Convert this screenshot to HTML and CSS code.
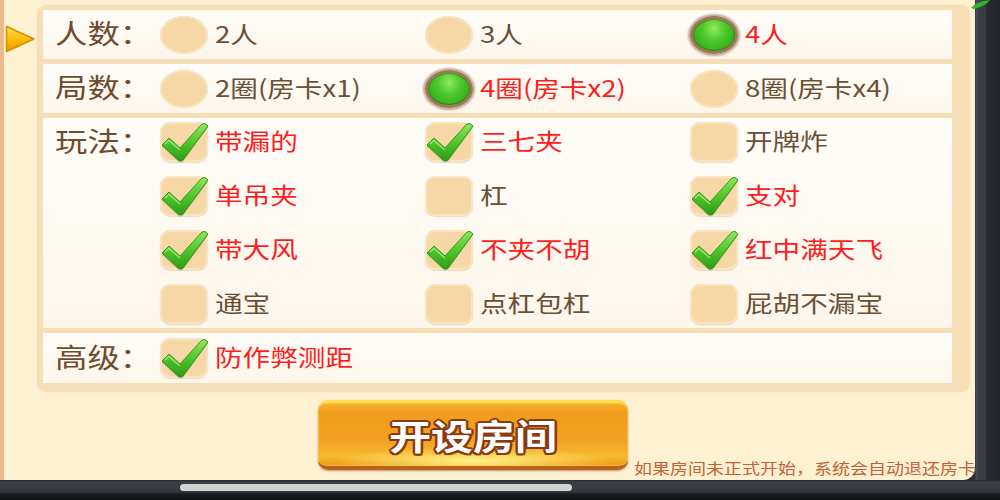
FILE: index.html
```html
<!DOCTYPE html>
<html lang="zh-CN">
<head>
<meta charset="utf-8">
<title>开设房间</title>
<link rel="stylesheet" href="styles.css">
</head>
<body>
<svg class="defs" width="0" height="0" aria-hidden="true">
  <defs>
    <linearGradient id="gcheck" x1="0" y1="0" x2="0" y2="1">
      <stop offset="0" stop-color="#8ee85a"/>
      <stop offset="0.55" stop-color="#4cc22a"/>
      <stop offset="1" stop-color="#2f9a17"/>
    </linearGradient>
    <linearGradient id="garrow" x1="0" y1="0" x2="0" y2="1">
      <stop offset="0" stop-color="#ffdc4a"/>
      <stop offset="0.6" stop-color="#f9b800"/>
      <stop offset="1" stop-color="#e79a00"/>
    </linearGradient>
    <symbol id="tick" viewBox="0 0 48 42">
      <path d="M1 24 L8 17 L19 27 L41 3 Q44 1 47 5 L22 39 Q19 41 17 39 Z" fill="#3b7d1f" opacity="0.35" transform="translate(0 1.5)"/>
      <path d="M1 24 L8 17 L19 27 L41 3 Q44 1 47 5 L22 39 Q19 41 17 39 Z" fill="url(#gcheck)" stroke="#34961c" stroke-width="1"/>
      <path d="M4 23 L8 19.5 L19 29" fill="none" stroke="#b8f58e" stroke-width="1.4" opacity="0.7"/>
    </symbol>
  </defs>
</svg>
<div class="screen">
  <div class="stage">
    <div class="board">
      <div class="gutter">
        <svg class="pointer" viewBox="0 0 30 28"><path d="M1.5 1.5 L29 14 L1.5 26.5 Z" fill="url(#garrow)" stroke="#d58e00" stroke-width="1.5" stroke-linejoin="round"/></svg>
      </div>
      <div class="main">
        <div class="panel">
          <div class="row">
            <div class="label"><span class="s">人数：</span></div>
            <div class="options">
              <div class="opt"><span class="radio"></span><span class="txt">2人</span></div>
              <div class="opt"><span class="radio"></span><span class="txt">3人</span></div>
              <div class="opt"><span class="radio on"></span><span class="txt sel">4人</span></div>
            </div>
          </div>
          <div class="row">
            <div class="label"><span class="s">局数：</span></div>
            <div class="options">
              <div class="opt"><span class="radio"></span><span class="txt">2圈(房卡x1)</span></div>
              <div class="opt"><span class="radio on"></span><span class="txt sel">4圈(房卡x2)</span></div>
              <div class="opt"><span class="radio"></span><span class="txt">8圈(房卡x4)</span></div>
            </div>
          </div>
          <div class="row">
            <div class="label"><span class="s">玩法：</span></div>
            <div class="options">
              <div class="opt"><span class="check"><svg><use href="#tick"/></svg></span><span class="txt sel">带漏的</span></div>
              <div class="opt"><span class="check"><svg><use href="#tick"/></svg></span><span class="txt sel">三七夹</span></div>
              <div class="opt"><span class="check"></span><span class="txt">开牌炸</span></div>
              <div class="opt"><span class="check"><svg><use href="#tick"/></svg></span><span class="txt sel">单吊夹</span></div>
              <div class="opt"><span class="check"></span><span class="txt">杠</span></div>
              <div class="opt"><span class="check"><svg><use href="#tick"/></svg></span><span class="txt sel">支对</span></div>
              <div class="opt"><span class="check"><svg><use href="#tick"/></svg></span><span class="txt sel">带大风</span></div>
              <div class="opt"><span class="check"><svg><use href="#tick"/></svg></span><span class="txt sel">不夹不胡</span></div>
              <div class="opt"><span class="check"><svg><use href="#tick"/></svg></span><span class="txt sel">红中满天飞</span></div>
              <div class="opt"><span class="check"></span><span class="txt">通宝</span></div>
              <div class="opt"><span class="check"></span><span class="txt">点杠包杠</span></div>
              <div class="opt"><span class="check"></span><span class="txt">屁胡不漏宝</span></div>
            </div>
          </div>
          <div class="row row-last">
            <div class="label"><span class="s">高级：</span></div>
            <div class="options">
              <div class="opt"><span class="check"><svg><use href="#tick"/></svg></span><span class="txt sel">防作弊测距</span></div>
            </div>
          </div>
        </div>
        <div class="footer">
          <button class="create" type="button"><span class="s">开设房间</span></button>
          <p class="note"><span class="s">如果房间未正式开始，系统会自动退还房卡</span></p>
        </div>
      </div>
    </div>
    <div class="frame">
      <svg class="leaf" viewBox="0 0 20 9"><path d="M0 8 Q6 1 19 0 Q15 6 3 9 Z" fill="#2eb52a"/></svg>
    </div>
  </div>
  <div class="bottom"><span class="pill"></span></div>
</div>
</body>
</html>
```

FILE: styles.css
```css
* {
  box-sizing: border-box;
  margin: 0;
  padding: 0;
}

body {
  width: 1000px;
  height: 500px;
  overflow: hidden;
  background: #2a2d33;
  font-family: "Noto Sans CJK SC", "Noto Sans", sans-serif;
}

.defs {
  position: absolute;
  width: 0;
  height: 0;
}

.screen {
  width: 1000px;
  height: 500px;
  display: flex;
  flex-direction: column;
}

.stage {
  display: flex;
  height: 480px;
}

.board {
  width: 975px;
  height: 480px;
  flex: none;
  display: flex;
  background: #fdf1d1;
  border-left: 4px solid #eab98c;
  border-bottom-right-radius: 12px;
}

.gutter {
  width: 32px;
  flex: none;
}

.pointer {
  display: block;
  width: 30px;
  height: 28px;
  margin: 25px 0 0 1px;
}

.main {
  width: 935px;
  flex: none;
}

.panel {
  margin-top: 4px;
  background: #f6dfb6;
  border-radius: 10px;
  box-shadow: inset 0 0 0 1px #fbecd0;
  padding: 6px 19px 10px 7px;
  display: flex;
  flex-direction: column;
  gap: 5px;
}

.row {
  display: grid;
  grid-template-columns: 117px 1fr;
  align-items: center;
  min-height: 49px;
  background: linear-gradient(#fffdf9, #fdf6eb);
}

.row-last {
  min-height: 50px;
}

.label {
  align-self: start;
  padding-left: 12px;
  height: 48px;
  line-height: 46px;
  font-size: 27px;
  color: #6f4b2e;
}

.row-last .label {
  height: 50px;
  line-height: 48px;
}

.s {
  display: inline-block;
  white-space: nowrap;
  transform: scaleX(1.2);
  transform-origin: left center;
}

.options {
  display: grid;
  grid-template-columns: repeat(3, 265px);
  row-gap: 6px;
}

.opt {
  display: flex;
  align-items: center;
  gap: 7px;
  height: 48px;
}

.radio {
  flex: none;
  width: 48px;
  height: 38px;
  border-radius: 50%;
  background: #f6d8a7;
  box-shadow: inset 0 0 0 2px #f9e3bf;
}

.radio.on {
  border: 3px solid #9a7a58;
  background: radial-gradient(ellipse at 50% 30%, #8fea5c 0%, #4cc82a 40%, #2ea816 85%, #2a9414 100%);
  box-shadow: 0 0 2px 2px rgba(150, 115, 80, 0.6), inset 0 0 0 1px rgba(90, 70, 40, 0.5);
}

.check {
  flex: none;
  position: relative;
  width: 48px;
  height: 40px;
  border-radius: 10px;
  background: #f6d8a7;
  box-shadow: inset 0 0 0 2px #f9e4c2, 0 1px 1px rgba(200, 160, 110, 0.35);
}

.check svg {
  position: absolute;
  left: 1px;
  top: -1px;
  width: 48px;
  height: 42px;
}

.txt {
  display: inline-block;
  white-space: nowrap;
  font-size: 23px;
  line-height: 1;
  margin-top: -3px;
  color: #6c5034;
  transform: scaleX(1.2);
  transform-origin: left center;
}

.txt.sel {
  color: #ff1c1c;
}

.footer {
  display: flex;
  height: 87px;
  padding: 7px 0 0 282px;
}

.create {
  flex: none;
  width: 310px;
  height: 70px;
  border: none;
  border-radius: 10px;
  border-top: 3px solid #ffdc4c;
  border-bottom: 4px solid #b9621a;
  background:
    radial-gradient(ellipse 45% 22% at 50% 92%, rgba(255, 246, 140, 0.95), rgba(255, 220, 80, 0) 100%),
    linear-gradient(#f7b22e 0%, #f09c1c 15%, #f2a222 60%, #f7b92e 85%, #ee9a1a 100%);
  box-shadow: 0 1px 2px rgba(120, 60, 10, 0.5), inset 0 0 0 1px rgba(255, 210, 90, 0.5);
  font-family: inherit;
  font-size: 35px;
  font-weight: bold;
  color: #fff;
  text-shadow:
    2px 0 0 #8a3a12, -2px 0 0 #8a3a12, 0 2px 0 #8a3a12, 0 -2px 0 #8a3a12,
    1.5px 1.5px 0 #8a3a12, -1.5px 1.5px 0 #8a3a12, 1.5px -1.5px 0 #8a3a12, -1.5px -1.5px 0 #8a3a12;
  text-align: center;
  line-height: 60px;
}

.create .s {
  transform-origin: center center;
}

.note {
  align-self: flex-end;
  margin: 0 0 2px 6px;
  line-height: 20px;
  font-size: 15px;
  color: #c2623a;
}

.frame {
  position: relative;
  flex: 1;
  background: linear-gradient(to right, #2a2d33 0, #4a4d55 1px, #3d4048 4px, #383b42 10px, #26292f 12px, #22252b 100%);
}

.leaf {
  position: absolute;
  left: -4px;
  top: 0;
  width: 20px;
  height: 9px;
}

.bottom {
  height: 20px;
  background: linear-gradient(#24272d 0, #3c3f46 2px, #33363c 12px, #1a1c20 14px, #111215 100%);
  padding: 4px 0 0 180px;
}

.pill {
  display: block;
  width: 392px;
  height: 7px;
  border-radius: 4px;
  background: #d2d2d2;
}
```
